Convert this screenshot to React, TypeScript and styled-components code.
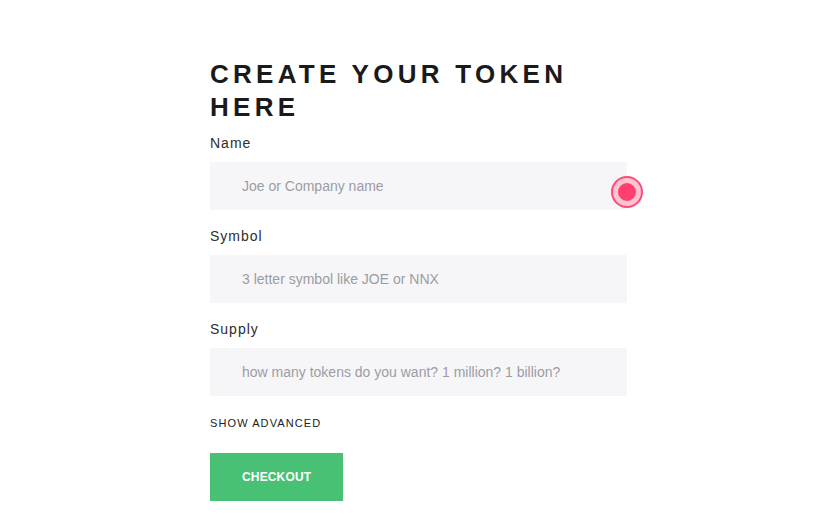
import React from "react";
import styled, { createGlobalStyle } from "styled-components";

const GlobalStyle = createGlobalStyle`
  html, body {
    margin: 0;
    padding: 0;
    background: #ffffff;
  }
  body {
    font-family: "Liberation Sans", Arial, sans-serif;
  }
`;

const Page = styled.main`
  width: 828px;
  min-height: 517px;
  box-sizing: border-box;
  padding: 58px 0 0 210px;
`;

const Form = styled.form`
  width: 417px;
  display: flex;
  flex-direction: column;
`;

const Title = styled.h1`
  margin: 0;
  font-size: 26px;
  line-height: 33px;
  font-weight: 700;
  letter-spacing: 4.27px;
  color: #1a1a1a;
  text-transform: uppercase;
`;

const Field = styled.div<{ $first?: boolean }>`
  display: flex;
  flex-direction: column;
  margin-top: ${(p) => (p.$first ? "9px" : "16px")};
`;

const Label = styled.label`
  font-size: 14px;
  line-height: 20px;
  letter-spacing: 1px;
  color: #2d2d2d;
  margin-bottom: 9px;
`;

const InputWrap = styled.div`
  position: relative;
`;

const Input = styled.input`
  display: block;
  width: 100%;
  height: 48px;
  box-sizing: border-box;
  border: none;
  outline: none;
  background: #f6f6f8;
  padding: 0 32px;
  font-family: "Liberation Sans", Arial, sans-serif;
  font-size: 14px;
  color: #333;

  &::placeholder {
    color: #9c9ca3;
  }
`;

const Cursor = styled.span`
  position: absolute;
  left: 401px;
  top: 14px;
  width: 32px;
  height: 32px;
  box-sizing: border-box;
  border-radius: 50%;
  border: 2px solid #ff4a78;
  background: #ffc3d3;
  display: flex;
  align-items: center;
  justify-content: center;

  &::after {
    content: "";
    width: 18px;
    height: 18px;
    border-radius: 50%;
    background: #ff3f6e;
  }
`;

const Advanced = styled.a`
  margin-top: 19px;
  font-size: 11px;
  line-height: 16px;
  letter-spacing: 1.1px;
  color: #222;
  text-transform: uppercase;
  cursor: pointer;
`;

const Checkout = styled.button`
  margin-top: 22px;
  align-self: flex-start;
  height: 48px;
  padding: 0 32px;
  border: none;
  background: #48c174;
  color: #ffffff;
  font-family: "Liberation Sans", Arial, sans-serif;
  font-size: 12px;
  font-weight: 700;
  letter-spacing: 0.15px;
  text-transform: uppercase;
  cursor: pointer;
`;

const fields = [
  { id: "name", label: "Name", placeholder: "Joe or Company name" },
  { id: "symbol", label: "Symbol", placeholder: "3 letter symbol like JOE or NNX" },
  {
    id: "supply",
    label: "Supply",
    placeholder: "how many tokens do you want? 1 million? 1 billion?",
  },
];

const App = () => (
  <>
    <GlobalStyle />
    <Page>
      <Form onSubmit={(e) => e.preventDefault()}>
        <Title>Create your token here</Title>
        {fields.map((f, i) => (
          <Field key={f.id} $first={i === 0}>
            <Label htmlFor={f.id}>{f.label}</Label>
            <InputWrap>
              <Input id={f.id} placeholder={f.placeholder} />
              {i === 0 && <Cursor />}
            </InputWrap>
          </Field>
        ))}
        <Advanced>Show advanced</Advanced>
        <Checkout type="submit">Checkout</Checkout>
      </Form>
    </Page>
  </>
);

export default App;
